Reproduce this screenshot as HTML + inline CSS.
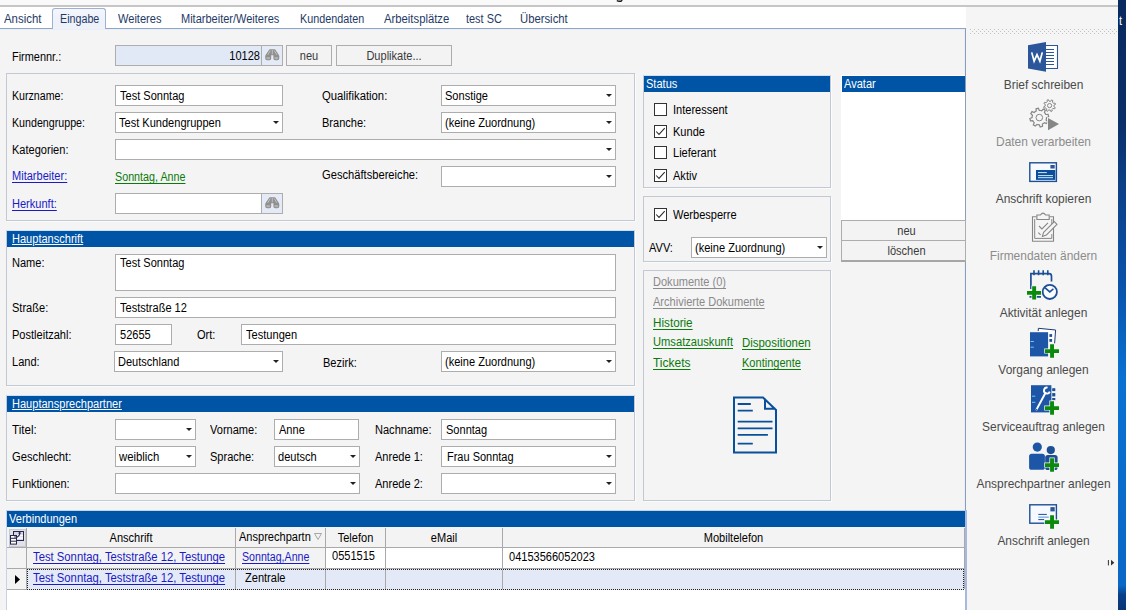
<!DOCTYPE html><html><head><meta charset="utf-8"><title>Firma</title><style>
*{margin:0;padding:0;box-sizing:border-box}
html,body{width:1126px;height:610px;overflow:hidden;background:#f4f4f5}
body{position:relative;font-family:"Liberation Sans",sans-serif;font-size:12px;color:#000;line-height:13px}
div,span,a{position:absolute;white-space:nowrap}
.l{height:13px;transform:scaleX(.92);transform-origin:0 0}
.c{transform-origin:50% 0;text-align:center}
.r{transform-origin:100% 0;text-align:right}
.in{border:1px solid #adadad;background:#fff}
.cb{border:1px solid #adadad;background:#fff}
.cb i{position:absolute;right:3px;top:8px;width:0;height:0;border-left:3px solid transparent;border-right:3px solid transparent;border-top:3px solid #222}
.hd{background:#0054a6;height:16px}
.w{color:#fff}
.gb{border:1px solid #c3c9d3;box-shadow:1px 1px 0 #fafbfd}
.gh{border-top-color:#cfe0f5}
.bl{color:#1a1ac8;text-decoration:underline;text-underline-offset:2px}
.gr{color:#0a7a0a;text-decoration:underline;text-underline-offset:2px}
.gy{color:#8a8a8a;text-decoration:underline;text-underline-offset:2px}
.btn{border:1px solid #adadad;background:#f3f3f3}
.dk{color:#3a3a3a}
.ck{width:13px;height:13px;border:1px solid #333;background:#fff}
.tab{color:#1e3a66}
.sb{left:968px;width:151px;text-align:center;font-size:11.95px;color:#4a4a4a;height:15px;line-height:15px}
.sb.d{color:#8c8c8c}
svg{position:absolute;overflow:visible}
</style></head><body>
<div style="left:0px;top:0px;width:1126px;height:5px;background:#f9f9f9"></div>
<svg width="8" height="4" viewBox="0 0 8 4" style="left:616px;top:0"><path d="M0.8,0.6 Q3.5,1.8 5.6,0.8 L6.4,-1" fill="none" stroke="#111" stroke-width="1.3"/></svg>
<div style="left:0px;top:5px;width:1118px;height:2px;background:#c6c6c6"></div>
<div style="left:0px;top:7px;width:966px;height:21px;background:#fff"></div>
<div style="left:0px;top:28px;width:966px;height:1px;background:#93a4bf"></div>
<div style="left:0px;top:29px;width:965px;height:1px;background:#e6effc"></div>
<div style="left:964px;top:29px;width:1px;height:482px;background:#e6effc"></div>
<div style="left:52px;top:8px;width:54px;height:21px;background:linear-gradient(#f3f6fc,#edf1fa 60%,#f0f2f7);border:1px solid #9fb1cf;border-bottom:none;border-radius:3px 3px 0 0"></div>
<span class="l tab" style="left:4px;top:13px;transform:scaleX(0.950);">Ansicht</span>
<span class="l tab" style="left:59.5px;top:13px;transform:scaleX(0.892);">Eingabe</span>
<span class="l tab" style="left:117.7px;top:13px;transform:scaleX(0.923);">Weiteres</span>
<span class="l tab" style="left:180.5px;top:13px;transform:scaleX(0.917);">Mitarbeiter/Weiteres</span>
<span class="l tab" style="left:300px;top:13px;transform:scaleX(0.899);">Kundendaten</span>
<span class="l tab" style="left:383.8px;top:13px;transform:scaleX(0.941);">Arbeitsplätze</span>
<span class="l tab" style="left:466px;top:13px;transform:scaleX(0.910);">test SC</span>
<span class="l tab" style="left:520px;top:13px;transform:scaleX(0.941);">Übersicht</span>
<div style="left:965px;top:28px;width:1px;height:582px;background:#8d9db6"></div>
<div style="left:966px;top:7px;width:152px;height:603px;background:#f5f5f5"></div>
<div style="left:1118px;top:0px;width:8px;height:610px;background:linear-gradient(180deg,#0a2a5e 0,#0b2f68 20%,#0c3f86 30%,#0a55ad 48%,#0a72d2 62%,#0a6ccb 80%,#0a68c6 96%,#0a3f88 97.5%,#0a3575 100%)"></div>
<span class="l w" style="left:1119px;top:15px;">t</span>
<span class="l " style="left:12px;top:51px;transform:scaleX(0.911);">Firmennr.:</span>
<div class="in" style="left:115px;top:45px;width:147px;height:21px;background:#e1e8f6"></div>
<span class="l r " style="left:160px;top:50px;width:100px;">10128</span>
<div class="btn" style="left:261px;top:45px;width:22px;height:21px;background:#e4ebf6"></div>
<svg width="15" height="12" viewBox="0 0 15 12" style="left:265px;top:49px"><path d="M5.1,0.2 H9.5 Q10.3,0.2 10.8,1.2 L13.6,5.6 Q14.3,6.6 14.3,7.6 V9.2 Q14.3,11.2 12.3,11.2 H10.2 Q8.4,11.2 8.4,9.4 V6.2 H6.2 V9.4 Q6.2,11.2 4.4,11.2 H2.2 Q0.2,11.2 0.2,9.2 V7.6 Q0.2,6.6 0.9,5.6 L3.8,1.2 Q4.3,0.2 5.1,0.2 Z" fill="#909090"/><path d="M5.3,1.6 L2.7,5.8 M9.3,1.6 L11.9,5.8" stroke="#c4c4c4" stroke-width="1"/><path d="M7.3,0.9 V5.2" stroke="#cdcdcd" stroke-width="0.8"/><ellipse cx="3.2" cy="9.1" rx="2" ry="1.2" fill="#b4b4b4"/><ellipse cx="11.3" cy="9.1" rx="2" ry="1.2" fill="#b4b4b4"/></svg>
<div class="btn" style="left:286px;top:45px;width:46px;height:21px;"></div>
<span class="l c dk" style="left:286px;top:50px;width:46px;">neu</span>
<div class="btn" style="left:336px;top:45px;width:116px;height:21px;"></div>
<span class="l c dk" style="left:336px;top:50px;width:116px;">Duplikate...</span>
<div class="gb" style="left:6px;top:73px;width:629px;height:148px;"></div>
<span class="l " style="left:12px;top:90px;transform:scaleX(0.886);">Kurzname:</span>
<div class="in" style="left:115px;top:85px;width:168px;height:21px;"></div>
<span class="l " style="left:120px;top:90px;">Test Sonntag</span>
<span class="l " style="left:322px;top:90px;transform:scaleX(0.941);">Qualifikation:</span>
<div class="cb" style="left:441px;top:85px;width:175px;height:21px"><i></i></div>
<span class="l " style="left:445px;top:90px;">Sonstige</span>
<span class="l " style="left:12px;top:117px;transform:scaleX(0.889);">Kundengruppe:</span>
<div class="cb" style="left:115px;top:112px;width:168px;height:21px"><i></i></div>
<span class="l " style="left:119px;top:117px;">Test Kundengruppen</span>
<span class="l " style="left:322px;top:117px;">Branche:</span>
<div class="cb" style="left:441px;top:112px;width:175px;height:21px"><i></i></div>
<span class="l " style="left:445px;top:117px;">(keine Zuordnung)</span>
<span class="l " style="left:12px;top:144px;">Kategorien:</span>
<div class="cb" style="left:115px;top:139px;width:501px;height:21px"><i></i></div>
<span class="l bl" style="left:12px;top:170px;">Mitarbeiter:</span>
<span class="l gr" style="left:114.5px;top:171px;transform:scaleX(0.895);">Sonntag, Anne</span>
<span class="l " style="left:322px;top:169px;transform:scaleX(0.930);">Geschäftsbereiche:</span>
<div class="cb" style="left:441px;top:166px;width:175px;height:21px"><i></i></div>
<span class="l bl" style="left:12px;top:198px;">Herkunft:</span>
<div class="in" style="left:115px;top:193px;width:147px;height:21px;"></div>
<div class="btn" style="left:261px;top:193px;width:22px;height:21px;background:#e4ebf6"></div>
<svg width="15" height="12" viewBox="0 0 15 12" style="left:265px;top:197px"><path d="M5.1,0.2 H9.5 Q10.3,0.2 10.8,1.2 L13.6,5.6 Q14.3,6.6 14.3,7.6 V9.2 Q14.3,11.2 12.3,11.2 H10.2 Q8.4,11.2 8.4,9.4 V6.2 H6.2 V9.4 Q6.2,11.2 4.4,11.2 H2.2 Q0.2,11.2 0.2,9.2 V7.6 Q0.2,6.6 0.9,5.6 L3.8,1.2 Q4.3,0.2 5.1,0.2 Z" fill="#909090"/><path d="M5.3,1.6 L2.7,5.8 M9.3,1.6 L11.9,5.8" stroke="#c4c4c4" stroke-width="1"/><path d="M7.3,0.9 V5.2" stroke="#cdcdcd" stroke-width="0.8"/><ellipse cx="3.2" cy="9.1" rx="2" ry="1.2" fill="#b4b4b4"/><ellipse cx="11.3" cy="9.1" rx="2" ry="1.2" fill="#b4b4b4"/></svg>
<div class="gb gh" style="left:6px;top:230px;width:629px;height:156px;"></div>
<div class="hd" style="left:7px;top:231px;width:627px;height:16px;"></div>
<span class="l w" style="left:12px;top:233px;text-decoration:underline">Hauptanschrift</span>
<span class="l " style="left:12px;top:257px;">Name:</span>
<div class="in" style="left:115px;top:254px;width:501px;height:37px;"></div>
<span class="l " style="left:120px;top:257px;">Test Sonntag</span>
<span class="l " style="left:12px;top:302px;">Straße:</span>
<div class="in" style="left:115px;top:297px;width:501px;height:21px;"></div>
<span class="l " style="left:120px;top:302px;">Teststraße 12</span>
<span class="l " style="left:12px;top:329px;">Postleitzahl:</span>
<div class="in" style="left:115px;top:324px;width:57px;height:21px;"></div>
<span class="l " style="left:120px;top:329px;">52655</span>
<span class="l " style="left:197px;top:329px;">Ort:</span>
<div class="in" style="left:241px;top:324px;width:375px;height:21px;"></div>
<span class="l " style="left:246px;top:329px;transform:scaleX(0.923);">Testungen</span>
<span class="l " style="left:12px;top:356px;">Land:</span>
<div class="cb" style="left:114px;top:351px;width:169px;height:21px"><i></i></div>
<span class="l " style="left:118px;top:356px;">Deutschland</span>
<span class="l " style="left:322.7px;top:357px;">Bezirk:</span>
<div class="cb" style="left:441px;top:351px;width:175px;height:21px"><i></i></div>
<span class="l " style="left:445px;top:356px;">(keine Zuordnung)</span>
<div class="gb gh" style="left:6px;top:395px;width:629px;height:106px;"></div>
<div class="hd" style="left:7px;top:396px;width:627px;height:16px;"></div>
<span class="l w" style="left:12px;top:398px;text-decoration:underline">Hauptansprechpartner</span>
<span class="l " style="left:12px;top:424px;transform:scaleX(0.966);">Titel:</span>
<div class="cb" style="left:115px;top:419px;width:81px;height:21px"><i></i></div>
<span class="l " style="left:210px;top:424px;">Vorname:</span>
<div class="in" style="left:274px;top:419px;width:85px;height:21px;"></div>
<span class="l " style="left:279px;top:424px;">Anne</span>
<span class="l " style="left:375px;top:424px;">Nachname:</span>
<div class="in" style="left:441px;top:419px;width:175px;height:21px;"></div>
<span class="l " style="left:446px;top:424px;">Sonntag</span>
<span class="l " style="left:12px;top:451px;transform:scaleX(0.937);">Geschlecht:</span>
<div class="cb" style="left:115px;top:446px;width:81px;height:21px"><i></i></div>
<span class="l " style="left:119px;top:451px;transform:scaleX(0.944);">weiblich</span>
<span class="l " style="left:210px;top:451px;">Sprache:</span>
<div class="cb" style="left:274px;top:446px;width:86px;height:21px"><i></i></div>
<span class="l " style="left:278px;top:451px;">deutsch</span>
<span class="l " style="left:375px;top:451px;">Anrede 1:</span>
<div class="cb" style="left:441px;top:446px;width:175px;height:21px"><i></i></div>
<span class="l " style="left:447.3px;top:451px;transform:scaleX(0.915);">Frau Sonntag</span>
<span class="l " style="left:12px;top:478px;">Funktionen:</span>
<div class="cb" style="left:115px;top:473px;width:245px;height:21px"><i></i></div>
<span class="l " style="left:375px;top:478px;">Anrede 2:</span>
<div class="cb" style="left:441px;top:473px;width:175px;height:21px"><i></i></div>
<div class="gb gh" style="left:643px;top:75px;width:188px;height:113px;"></div>
<div class="hd" style="left:644px;top:76px;width:186px;height:16px;"></div>
<span class="l w" style="left:646px;top:78px;">Status</span>
<div class="ck" style="left:654px;top:103px"></div>
<span class="l " style="left:673px;top:104px;">Interessent</span>
<div class="ck" style="left:654px;top:125px"><svg width="13" height="13" viewBox="0 0 13 13" style="left:-1px;top:-1px"><path d="M2.2 6.5 L5 9.4 L10.7 3.2" fill="none" stroke="#2a2a2a" stroke-width="1.05"/></svg></div>
<span class="l " style="left:673px;top:126px;">Kunde</span>
<div class="ck" style="left:654px;top:146px"></div>
<span class="l " style="left:673px;top:147px;">Lieferant</span>
<div class="ck" style="left:654px;top:169px"><svg width="13" height="13" viewBox="0 0 13 13" style="left:-1px;top:-1px"><path d="M2.2 6.5 L5 9.4 L10.7 3.2" fill="none" stroke="#2a2a2a" stroke-width="1.05"/></svg></div>
<span class="l " style="left:673px;top:170px;">Aktiv</span>
<div class="gb" style="left:643px;top:196px;width:188px;height:66px;"></div>
<div class="ck" style="left:654px;top:208px"><svg width="13" height="13" viewBox="0 0 13 13" style="left:-1px;top:-1px"><path d="M2.2 6.5 L5 9.4 L10.7 3.2" fill="none" stroke="#2a2a2a" stroke-width="1.05"/></svg></div>
<span class="l " style="left:673px;top:209px;">Werbesperre</span>
<span class="l " style="left:649px;top:242px;">AVV:</span>
<div class="cb" style="left:691px;top:237px;width:136px;height:21px"><i></i></div>
<span class="l " style="left:695px;top:242px;">(keine Zuordnung)</span>
<div style="left:841px;top:75px;width:124px;height:146px;background:#fff;border-color:#c3c3c3;border-right:none"></div>
<div class="hd" style="left:842px;top:76px;width:123px;height:16px;"></div>
<span class="l w" style="left:844px;top:78px;">Avatar</span>
<div class="btn" style="left:841px;top:220px;width:125px;height:21px;"></div>
<span class="l c dk" style="left:843.5px;top:225px;width:125px;">neu</span>
<div class="btn" style="left:841px;top:240px;width:125px;height:22px;border-bottom:2px solid #a6a6a6"></div>
<span class="l c dk" style="left:843.5px;top:245px;width:125px;">löschen</span>
<div class="gb" style="left:643px;top:270px;width:188px;height:231px;"></div>
<span class="l gy" style="left:653px;top:276px;">Dokumente (0)</span>
<span class="l gy" style="left:653px;top:296px;">Archivierte Dokumente</span>
<span class="l gr" style="left:653px;top:317px;transform:scaleX(0.974);">Historie</span>
<span class="l gr" style="left:653px;top:336px;transform:scaleX(0.930);">Umsatzauskunft</span>
<span class="l gr" style="left:742px;top:337px;transform:scaleX(0.952);">Dispositionen</span>
<span class="l gr" style="left:653px;top:357px;transform:scaleX(0.998);">Tickets</span>
<span class="l gr" style="left:742px;top:357px;">Kontingente</span>
<svg width="1126" height="610" viewBox="0 0 1126 610" style="left:0;top:0"><path d="M734,397.5 H763 L776,410 V452.5 H734 Z M765,398.5 V408.8 H775.5" fill="none" stroke="#0a4f9b" stroke-width="2"/><path d="M737.7,404 H750.8 M737.7,410.6 H752.8 M737.7,421.7 H772.5 M737.7,428.3 H772.5 M737.7,434.8 H767.9 M737.7,443.6 H752.8" stroke="#0a4f9b" stroke-width="1.8"/></svg>
<div style="left:6px;top:510px;width:959px;height:100px;background:#fff;border-left:1px solid #c5d3e6;border-top:1px solid #c5d3e6"></div>
<div style="left:965px;top:510px;width:2px;height:100px;background:#a6b9e0"></div>
<div class="hd" style="left:7px;top:511px;width:958px;height:16px;"></div>
<span class="l w" style="left:9px;top:513px;">Verbindungen</span>
<div style="left:7px;top:527px;width:958px;height:21px;background:#f3f3f3"></div>
<div style="left:7px;top:548px;width:229px;height:21px;background:#f3f3f3"></div>
<div style="left:236px;top:548px;width:89px;height:21px;background:#f3f3f3"></div>
<div style="left:7px;top:569px;width:19px;height:20px;background:#f3f3f3"></div>
<div style="left:7px;top:547px;width:958px;height:1px;background:#a9a9a9"></div>
<div style="left:7px;top:568px;width:958px;height:1px;background:#a9a9a9"></div>
<div style="left:7px;top:589px;width:20px;height:1px;background:#a9a9a9"></div>
<div style="left:26px;top:528px;width:1px;height:61px;background:#a9a9a9"></div>
<div style="left:235px;top:528px;width:1px;height:61px;background:#a9a9a9"></div>
<div style="left:325px;top:528px;width:1px;height:61px;background:#a9a9a9"></div>
<div style="left:385px;top:528px;width:1px;height:61px;background:#a9a9a9"></div>
<div style="left:502px;top:528px;width:1px;height:61px;background:#a9a9a9"></div>
<div style="left:964px;top:528px;width:1px;height:61px;background:#a9a9a9"></div>
<div style="left:27px;top:569px;width:937px;height:21px;background:#e3e9f6;border:1px dotted #222"></div>
<div style="left:235px;top:570px;width:1px;height:19px;background:#a9a9a9"></div>
<div style="left:325px;top:570px;width:1px;height:19px;background:#a9a9a9"></div>
<div style="left:385px;top:570px;width:1px;height:19px;background:#a9a9a9"></div>
<div style="left:502px;top:570px;width:1px;height:19px;background:#a9a9a9"></div>
<span class="l c " style="left:27px;top:532px;width:208px;">Anschrift</span>
<span class="l " style="left:239px;top:531px;">Ansprechpartn</span>
<span class="l c " style="left:326px;top:532px;width:59px;">Telefon</span>
<span class="l c " style="left:386px;top:532px;width:116px;">eMail</span>
<span class="l c " style="left:503px;top:532px;width:461px;">Mobiltelefon</span>
<svg width="8" height="7" viewBox="0 0 8 7" style="left:314px;top:533px"><path d="M0.5 0.5 H7.5 L4 6.5 Z" fill="none" stroke="#a6a6a6" stroke-width="1"/></svg>
<span class="l bl" style="left:33px;top:551px;transform:scaleX(0.940);">Test Sonntag, Teststraße 12, Testunge</span>
<span class="l bl" style="left:242px;top:551px;transform:scaleX(0.886);">Sonntag,Anne</span>
<span class="l " style="left:332px;top:550px;">0551515</span>
<span class="l " style="left:509px;top:551px;">04153566052023</span>
<span class="l bl" style="left:33px;top:572px;transform:scaleX(0.940);">Test Sonntag, Teststraße 12, Testunge</span>
<span class="l " style="left:245px;top:572px;">Zentrale</span>
<svg width="6" height="9" viewBox="0 0 6 9" style="left:15px;top:575px"><path d="M0 0 L5 4.5 L0 9 Z" fill="#000"/></svg>
<svg width="17" height="18" viewBox="0 0 17 18" style="left:9px;top:529px"><rect x="0.5" y="0.5" width="16" height="17" fill="#e1e1ea" stroke="#c9c9cf"/><rect x="4.5" y="2.5" width="10" height="9" fill="#d5d5e6" stroke="#25254d"/><path d="M8,6.5 H14 M8,9 H14" stroke="#fff" stroke-width="1.6"/><rect x="1.5" y="6.5" width="6" height="8.6" fill="#fff" stroke="#25254d"/><path d="M2,9.3 H7 M2,12.2 H7" stroke="#25254d" stroke-width="1"/><path d="M5.2,8 H8.5 L10.6,5.8 V4" fill="none" stroke="#25254d" stroke-width="1.1"/><path d="M9,4.6 L10.6,2.6 L12.2,4.6 Z" fill="#25254d"/></svg>
<div style="left:970px;top:29px;width:148px;height:1px;background:repeating-linear-gradient(90deg,#c2c2c2 0 1px,transparent 1px 4px)"></div>
<div style="left:972px;top:31px;width:146px;height:1px;background:repeating-linear-gradient(90deg,#c2c2c2 0 1px,transparent 1px 4px)"></div>
<div style="left:970px;top:33px;width:148px;height:1px;background:repeating-linear-gradient(90deg,#c2c2c2 0 1px,transparent 1px 4px)"></div>
<span class="sb" style="top:78px">Brief schreiben</span>
<span class="sb d" style="top:135px">Daten verarbeiten</span>
<span class="sb" style="top:192px">Anschrift kopieren</span>
<span class="sb d" style="top:249px">Firmendaten ändern</span>
<span class="sb" style="top:306px">Aktivität anlegen</span>
<span class="sb" style="top:363px">Vorgang anlegen</span>
<span class="sb" style="top:420px">Serviceauftrag anlegen</span>
<span class="sb" style="top:477px">Ansprechpartner anlegen</span>
<span class="sb" style="top:534px">Anschrift anlegen</span>
<svg width="1126" height="610" viewBox="0 0 1126 610" style="left:0;top:0"><path d="M1028,45.2 L1046,42 V71.8 L1028,68.6 Z" fill="#2b579a"/><path d="M1046,45.5 H1057.5 V68.5 H1046" fill="#fff" stroke="#2b579a" stroke-width="1.1"/><path d="M1046,49.5 H1054 M1046,52.5 H1054 M1046,55.5 H1054 M1046,58.5 H1054 M1046,61.5 H1054 M1046,64.5 H1054" stroke="#2b579a" stroke-width="1.1"/><path d="M1031.7,52.4 L1034.1,61.2 L1037,54.6 L1039.9,61.2 L1042.3,52.4" fill="none" stroke="#fff" stroke-width="1.7" stroke-linejoin="miter"/><path d="M1046.4,119.0 L1046.1,120.0 L1047.8,121.6 L1046.6,123.6 L1044.4,122.7 L1043.3,123.6 L1042.4,124.1 L1042.5,126.4 L1040.2,127.0 L1039.3,124.8 L1037.9,124.7 L1036.9,124.4 L1035.3,126.1 L1033.3,124.9 L1034.2,122.7 L1033.3,121.6 L1032.8,120.7 L1030.5,120.8 L1029.9,118.5 L1032.1,117.6 L1032.2,116.2 L1032.5,115.2 L1030.8,113.6 L1032.0,111.6 L1034.2,112.5 L1035.3,111.6 L1036.2,111.1 L1036.1,108.8 L1038.4,108.2 L1039.3,110.4 L1040.7,110.5 L1041.7,110.8 L1043.3,109.1 L1045.3,110.3 L1044.4,112.5 L1045.3,113.6 L1045.8,114.5 L1048.1,114.4 L1048.7,116.7 L1046.5,117.6 Z" fill="none" stroke="#868686" stroke-width="1.2"/><circle cx="1039.3" cy="117.6" r="3.3" fill="none" stroke="#868686" stroke-width="1"/><path d="M1054.0,106.0 L1053.9,106.7 L1055.3,107.6 L1054.6,108.9 L1053.0,108.4 L1052.4,109.0 L1051.9,109.4 L1052.2,111.0 L1050.8,111.5 L1050.1,110.0 L1049.2,110.0 L1048.5,109.9 L1047.6,111.3 L1046.3,110.6 L1046.8,109.0 L1046.2,108.4 L1045.8,107.9 L1044.2,108.2 L1043.7,106.8 L1045.2,106.1 L1045.2,105.2 L1045.3,104.5 L1043.9,103.6 L1044.6,102.3 L1046.2,102.8 L1046.8,102.2 L1047.3,101.8 L1047.0,100.2 L1048.4,99.7 L1049.1,101.2 L1050.0,101.2 L1050.7,101.3 L1051.6,99.9 L1052.9,100.6 L1052.4,102.2 L1053.0,102.8 L1053.4,103.3 L1055.0,103.0 L1055.5,104.4 L1054.0,105.1 Z" fill="#f5f5f5" stroke="#868686" stroke-width="1"/><circle cx="1049.6" cy="105.6" r="2.1" fill="none" stroke="#868686" stroke-width="1"/><path d="M1048,118 V130.2 L1059,124 Z" fill="#868686" stroke="#f5f5f5" stroke-width="1.6" paint-order="stroke"/><rect x="1029.8" y="162.8" width="26.6" height="18.6" fill="#f6f9ff" stroke="#1e4e94" stroke-width="1.4"/><rect x="1036" y="170" width="19.3" height="9.9" fill="#0a4f9b"/><path d="M1038,172.6 H1046.8 M1038,175.6 H1053 M1038,177.7 H1053" stroke="#cfeaff" stroke-width="1"/><rect x="1050.4" y="165" width="4.3" height="3.5" fill="#2b579a"/><path d="M1036.5,216.7 H1032.5 V241.3 H1053.5 V216.7 H1049.5" fill="none" stroke="#868686" stroke-width="1.1"/><path d="M1034.7,219 V238.4 H1051.8 V234 M1051.8,224 V219" fill="none" stroke="#868686" stroke-width="1"/><path d="M1036.9,219.5 V215 H1040.5 Q1043,211.2 1045.6,215 H1049.2 V219.5 Z" fill="#f5f5f5" stroke="#868686" stroke-width="1.1"/><path d="M1039,226 L1041.9,229 L1048,222.8 M1038.3,232.6 L1040.6,234.8" fill="none" stroke="#868686" stroke-width="1.1"/><path d="M1042.3,236.4 L1043.6,232.4 L1054.3,221.6 L1057,224.3 L1046.3,235.1 Z" fill="#f5f5f5" stroke="#868686" stroke-width="1.1" stroke-linejoin="round"/><path d="M1030.9,289 V273.7 H1049 Q1051.5,273.7 1051.5,276.2 V281.5 M1029.5,296.9 H1041" fill="none" stroke="#1e4e94" stroke-width="1.7"/><path d="M1034,270.3 V275.2 M1038.6,270.3 V275.2 M1043.2,270.3 V275.2 M1047.8,270.3 V275.2" stroke="#1e4e94" stroke-width="1.6"/><circle cx="1049.8" cy="291.9" r="7.1" fill="#f8fbff" stroke="#1e4e94" stroke-width="1.8"/><path d="M1044.9,287.6 L1049.8,291.9 L1053.4,288.9" fill="none" stroke="#1e4e94" stroke-width="1.5"/><path d="M1032.2,286.2 H1036.1 V291.09999999999997 H1041.1 V294.8 H1036.1 V299.59999999999997 H1032.2 V294.8 H1027 V291.09999999999997 H1032.2 Z" fill="#0b8a0b" stroke="#f3f8f3" stroke-width="1.4" paint-order="stroke"/><path d="M1038.2,331 L1038.4,328.3 L1055.6,330 L1054.6,343.5" fill="#fff" stroke="#1a3a75" stroke-width="1"/><rect x="1030" y="332.2" width="18.1" height="24.2" fill="#1d56a6"/><rect x="1049.4" y="334.1" width="2.7" height="2.8" fill="#1e4e94"/><rect x="1049.4" y="339" width="2.7" height="2.8" fill="#1e4e94"/><path d="M1030.6,341.5 H1033.8 M1030.6,347.2 H1033.8" stroke="#7fc4ff" stroke-width="1"/><path d="M1050.1000000000001,344.3 H1054.0 V349.2 H1059.0 V352.90000000000003 H1054.0 V357.7 H1050.1000000000001 V352.90000000000003 H1044.9 V349.2 H1050.1000000000001 Z" fill="#0b8a0b" stroke="#f3f8f3" stroke-width="1.4" paint-order="stroke"/><rect x="1031" y="385.2" width="20.4" height="27.2" fill="#1d56a6"/><rect x="1052.2" y="388.2" width="3.1" height="2.9" fill="#1e4e94"/><rect x="1052.2" y="393.1" width="3.1" height="3.3" fill="#1e4e94"/><rect x="1052.2" y="398" width="3.1" height="2.2" fill="#1e4e94"/><path d="M1032,396.2 H1035.3 M1032,402.3 H1035.3" stroke="#7fc4ff" stroke-width="1"/><path d="M1036.6,409.4 L1045.4,393" stroke="#fff" stroke-width="2" stroke-linecap="round"/><circle cx="1036.6" cy="409.4" r="0.6" fill="#1d56a6"/><path d="M1047.6,387.6 A3,3 0 1 0 1049.8,391.6" fill="none" stroke="#fff" stroke-width="1.9"/><path d="M1050.1000000000001,401.3 H1054.0 V406.2 H1059.0 V409.90000000000003 H1054.0 V414.7 H1050.1000000000001 V409.90000000000003 H1044.9 V406.2 H1050.1000000000001 Z" fill="#0b8a0b" stroke="#f3f8f3" stroke-width="1.4" paint-order="stroke"/><circle cx="1050.8" cy="450.1" r="4.1" fill="#1e4e94"/><rect x="1045.2" y="455" width="12.4" height="15.1" rx="2.6" fill="#1e4e94"/><circle cx="1037.3" cy="447.1" r="4.6" fill="#1d56a6"/><rect x="1029.1" y="453.7" width="15.8" height="16.1" rx="2.6" fill="#1d56a6"/><path d="M1050.1000000000001,458.3 H1054.0 V463.2 H1059.0 V466.90000000000003 H1054.0 V471.7 H1050.1000000000001 V466.90000000000003 H1044.9 V463.2 H1050.1000000000001 Z" fill="#0b8a0b" stroke="#f3f8f3" stroke-width="1.4" paint-order="stroke"/><rect x="1029.8" y="504.8" width="26.6" height="18.4" fill="#f6f9ff" stroke="#1e4e94" stroke-width="1.4"/><rect x="1050.4" y="507.1" width="4.3" height="4.3" fill="#2b579a"/><path d="M1038.3,514.4 H1046.8 M1038.3,519.6 H1044.2" stroke="#1e4e94" stroke-width="1"/><path d="M1038.3,517.2 H1048.8" stroke="#8fb8e8" stroke-width="1.6"/><path d="M1050.1000000000001,515.3 H1054.0 V520.1999999999999 H1059.0 V523.9 H1054.0 V528.6999999999999 H1050.1000000000001 V523.9 H1044.9 V520.1999999999999 H1050.1000000000001 Z" fill="#0b8a0b" stroke="#f3f8f3" stroke-width="1.4" paint-order="stroke"/><path d="M1108.4,560 V565.4" stroke="#333" stroke-width="1"/><path d="M1111,559.8 L1114.3,562.7 L1111,565.6 Z" fill="#333"/></svg>
</body></html>
